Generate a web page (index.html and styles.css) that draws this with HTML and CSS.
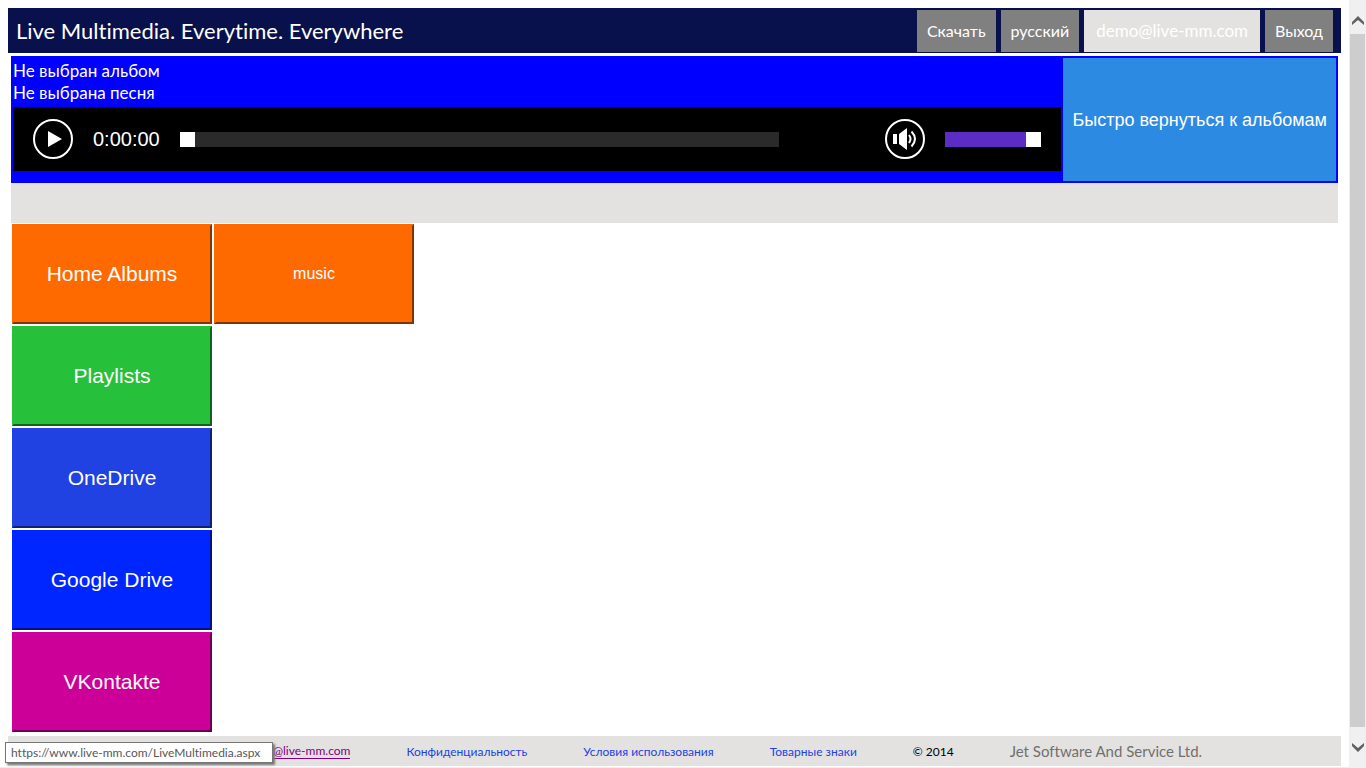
FILE: index.html
```html
<!DOCTYPE html>
<html lang="ru">
<head>
<meta charset="utf-8">
<title>Live Multimedia</title>
<link rel="stylesheet" href="styles.css">
</head>
<body>
<div class="page">
  <header class="topbar">
    <h1 class="brand">Live Multimedia. Everytime. Everywhere</h1>
    <nav class="menu">
      <a class="menu-item" href="#">Скачать</a>
      <a class="menu-item" href="#">русский</a>
      <a class="menu-item menu-user" href="#">demo@live-mm.com</a>
      <a class="menu-item" href="#">Выход</a>
    </nav>
  </header>
  <main class="content">
    <section class="player">
      <div class="deck">
        <p class="track">Не выбран альбом</p>
        <p class="track">Не выбрана песня</p>
        <div class="controls">
          <button class="round" type="button" aria-label="Play">
            <svg width="40" height="40" viewBox="0 0 40 40"><circle cx="20" cy="20" r="19" fill="none" stroke="#fff" stroke-width="2"/><path d="M15 12v16l14-8z" fill="#fff"/></svg>
          </button>
          <span class="time">0:00:00</span>
          <input class="slider seek" type="range" min="0" max="100" value="0" aria-label="Seek">
          <button class="round" type="button" aria-label="Mute">
            <svg width="40" height="40" viewBox="0 0 40 40"><circle cx="20" cy="20" r="19" fill="none" stroke="#fff" stroke-width="2"/><path d="M8 15h4v10H8zM14 15l8-6v22l-8-6z" fill="#fff"/><path d="M24 16q3 4 0 8M26.500 12.500q7 7.500 0 15" fill="none" stroke="#fff" stroke-width="2"/></svg>
          </button>
          <input class="slider volume" type="range" min="0" max="100" value="100" aria-label="Volume">
        </div>
      </div>
      <button class="back" type="button">Быстро вернуться к альбомам</button>
    </section>
    <div class="strip"></div>
    <div class="library">
      <nav class="sources">
        <button class="tile orange" type="button">Home Albums</button>
        <button class="tile green" type="button">Playlists</button>
        <button class="tile royal" type="button">OneDrive</button>
        <button class="tile blue" type="button">Google Drive</button>
        <button class="tile magenta" type="button">VKontakte</button>
      </nav>
      <div class="albums">
        <button class="tile orange album" type="button">music</button>
      </div>
    </div>
  </main>
  <footer class="footer">
    <a class="mail" href="#">@live-mm.com</a>
    <a href="#">Конфиденциальность</a>
    <a href="#">Условия использования</a>
    <a href="#">Товарные знаки</a>
    <span>© 2014</span>
    <span class="company">Jet Software And Service Ltd.</span>
  </footer>
</div>
<div class="scrollbar">
  <button class="arrow" type="button" aria-label="Scroll up"><svg width="12" height="10" viewBox="0 0 12 10"><path d="M0 9V6l6-6 6 6v3L6 4z" fill="#606060"/></svg></button>
  <div class="thumb"></div>
  <button class="arrow arrow-down" type="button" aria-label="Scroll down"><svg width="12" height="10" viewBox="0 0 12 10"><path d="M0 1v3l6 6 6-6V1L6 6z" fill="#606060"/></svg></button>
</div>
<div class="status">https://www.live-mm.com/LiveMultimedia.aspx</div>
</body>
</html>
```
FILE: styles.css
```css
* { box-sizing: border-box; }
body {
  margin: 0;
  min-height: 100vh;
  display: flex;
  background: #fff;
  border-bottom: 1px solid #efefef;
  font-family: Lato, "Noto Sans", sans-serif;
  font-variant-ligatures: none;
}
a { text-decoration: none; }
button { margin: 0; padding: 0; border: 0; cursor: pointer; }
.page {
  flex: 1;
  min-width: 0;
  display: flex;
  flex-direction: column;
  padding: 8px 8px 1px;
}
.topbar {
  display: flex;
  justify-content: space-between;
  padding: 2px 8px 1px;
  background: #08114b;
  color: #fff;
}
.brand { margin: 0; font-size: 22px; font-weight: 400; line-height: 42px; }
.menu { display: flex; gap: 5px; }
.menu-item {
  padding: 0 10px;
  background: #808080;
  color: #fff;
  font-size: 16px;
  line-height: 42px;
}
.menu-user { padding: 0 12px; background: #e4e2e0; font-size: 17px; }
.content { flex: 1; padding: 3px 3px 0; }
.player { display: flex; gap: 2px; padding: 2px; background: #00f; color: #fff; }
.deck { flex: 1; padding: 2px 0 10px; }
.track { margin: 0; font-size: 17px; line-height: 22px; }
.controls {
  display: flex;
  align-items: center;
  gap: 20px;
  height: 64px;
  margin-top: 3px;
  padding: 0 20px;
  background: #000;
}
.round { width: 40px; height: 40px; background: none; }
.round svg { display: block; }
.time { font: 20px "Liberation Sans", sans-serif; }
.slider { appearance: none; height: 15px; margin: 0; background: #2a2a2a; }
.slider::-webkit-slider-thumb { appearance: none; width: 15px; height: 15px; background: #fff; }
.seek { flex: 1; min-width: 0; margin-right: 86px; }
.volume { width: 96px; background: #5b2dc4; }
.back {
  padding: 2px 9px 0;
  background: #2d8ae2;
  color: #fff;
  font: 18px "Liberation Sans", sans-serif;
}
.strip { height: 40px; background: #e4e2e0; }
.library { display: flex; gap: 2px; padding: 1px; }
.sources { display: flex; flex-direction: column; gap: 2px; }
.albums { display: flex; flex-wrap: wrap; align-items: flex-start; gap: 2px; }
.tile {
  width: 200px;
  height: 100px;
  border: 2px solid;
  color: #fff;
  font: 21px "Liberation Sans", sans-serif;
}
.album { font-size: 16px; }
.orange { background: #ff6a00; border-color: #ff6a00 #7f3500 #7f3500 #ff6a00; }
.green { background: #27c03a; border-color: #27c03a #14611d #14611d #27c03a; }
.royal { background: #2042e2; border-color: #2042e2 #102171 #102171 #2042e2; }
.blue { background: #0026ff; border-color: #0026ff #00137f #00137f #0026ff; }
.magenta { background: #cc0099; border-color: #cc0099 #66004c #66004c #cc0099; }
.footer {
  display: flex;
  align-items: center;
  gap: 56px;
  height: 30px;
  padding-left: 265px;
  background: #e4e2e0;
  color: #000;
  font-size: 12px;
  white-space: nowrap;
}
.footer a { color: #2042e2; }
.footer .mail { color: #800080; border-bottom: 1px solid #800080; line-height: 14px; }
.footer .company { color: #707070; font-size: 15px; }
.scrollbar {
  width: 17px;
  display: flex;
  flex-direction: column;
  padding: 0 1px;
  background: #f0f0f0;
}
.arrow { height: 34px; padding-top: 9px; background: none; }
.arrow-down { height: 40px; padding-top: 0; }
.thumb { flex: 1; background: #cdcdcd; }
.status {
  position: absolute;
  left: 5px;
  bottom: 5px;
  min-width: 268px;
  padding: 0 5px;
  border: 1px solid #767676;
  background: #fff;
  box-shadow: 2px 2px 2px #777;
  color: #575757;
  font-size: 12px;
  line-height: 19px;
}
```
